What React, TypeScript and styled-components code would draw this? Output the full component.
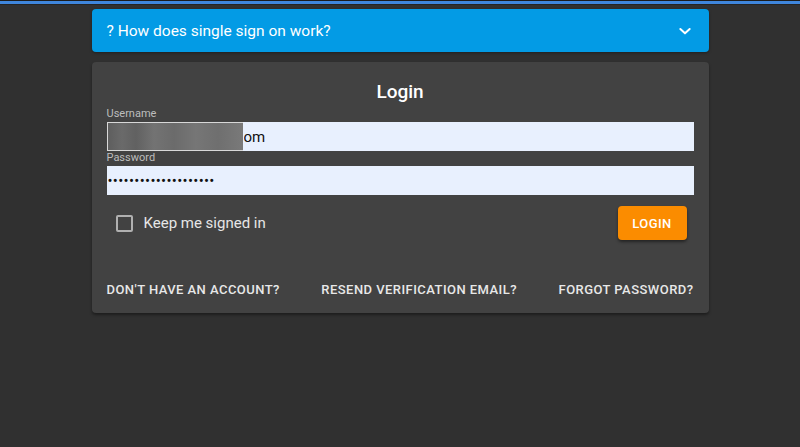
import React, { useState } from "react";
import styled, { createGlobalStyle } from "styled-components";

const GlobalStyle = createGlobalStyle`
  html, body {
    margin: 0;
    padding: 0;
    background-color: #303030;
    font-family: Roboto, "Liberation Sans", Arial, sans-serif;
  }
  * {
    box-sizing: border-box;
  }
`;

const Page = styled.div`
  min-height: 447px;
  background-color: #303030;
`;

const TopBar = styled.div`
  height: 5px;
  border-top: 1px solid #1c1c1c;
  border-bottom: 1px solid #242424;
  background-color: #3f86dc;
`;

const Main = styled.div`
  width: 617px;
  margin: 4px auto 0;
`;

const Accordion = styled.div`
  height: 43px;
  background-color: #039be5;
  border-radius: 4px;
  display: flex;
  align-items: center;
  justify-content: space-between;
  padding: 0 15px;
  color: #fff;
  font-size: 15.5px;
  box-shadow: 0 1px 3px rgba(0, 0, 0, 0.35);
`;

const Chevron = styled.svg`
  width: 16px;
  height: 16px;
  margin-right: 1px;
`;

const Card = styled.div`
  margin-top: 10px;
  background-color: #424242;
  border-radius: 4px;
  padding: 19px 15px 15px;
  box-shadow: 0 2px 3px rgba(0, 0, 0, 0.4);
`;

const Title = styled.div`
  text-align: center;
  color: #fff;
  font-size: 19px;
  font-weight: 500;
  line-height: 22px;
  margin-bottom: 4px;
`;

const Label = styled.div`
  color: #bdbdbd;
  font-size: 11px;
  line-height: 13px;
  margin-bottom: 2px;
`;

const Field = styled.div`
  position: relative;
  height: 29px;
`;

const Input = styled.input<{ $indent?: number; $spacing?: number }>`
  width: 100%;
  height: 29px;
  border: none;
  outline: none;
  background-color: #e8f0fe;
  color: #111;
  font-family: Roboto, "Liberation Sans", Arial, sans-serif;
  font-size: 15px;
  letter-spacing: ${(p) => p.$spacing ?? 0}px;
  padding: 0 0 0 ${(p) => p.$indent ?? 1}px;
`;

const Redacted = styled.span`
  position: absolute;
  left: 0;
  top: 0;
  width: 136px;
  height: 29px;
  border: 1px solid #d8d8d8;
  border-right: none;
  background: linear-gradient(
    90deg,
    #5e5e5e 0px,
    #6a6a6a 14px,
    #616161 28px,
    #737373 46px,
    #6b6b6b 66px,
    #767676 88px,
    #6f6f6f 110px,
    #7a7a7a 136px
  );
`;

const ActionRow = styled.div`
  display: flex;
  align-items: center;
  justify-content: space-between;
  margin-top: 11px;
  padding: 0 7px 0 9px;
`;

const CheckLabel = styled.label`
  display: flex;
  align-items: center;
  gap: 11px;
  color: #e6e6e6;
  font-size: 15px;
  cursor: pointer;
`;

const Box = styled.span<{ $checked: boolean }>`
  width: 17px;
  height: 17px;
  border: 2px solid #b0b0b0;
  border-radius: 2px;
  background-color: ${(p) => (p.$checked ? "#b0b0b0" : "transparent")};
`;

const LoginButton = styled.button`
  width: 69px;
  height: 34px;
  border: none;
  border-radius: 4px;
  background-color: #fb8c00;
  color: #fff;
  font-family: Roboto, "Liberation Sans", Arial, sans-serif;
  font-size: 13px;
  font-weight: 500;
  letter-spacing: 0.4px;
  box-shadow: 0 2px 3px rgba(0, 0, 0, 0.45);
  cursor: pointer;
`;

const Links = styled.div`
  display: flex;
  justify-content: space-between;
  margin-top: 42px;
  line-height: 16px;
`;

const LinkButton = styled.a`
  color: #e8e8e8;
  font-size: 13px;
  font-weight: 500;
  letter-spacing: 0.45px;
  text-transform: uppercase;
  text-decoration: none;
  cursor: pointer;
`;

export default function App() {
  const [keep, setKeep] = useState(false);

  return (
    <Page>
      <GlobalStyle />
      <TopBar />
      <Main>
        <Accordion>
          <span>? How does single sign on work?</span>
          <Chevron viewBox="0 0 24 24" fill="none" stroke="#fff" strokeWidth="3" strokeLinecap="round" strokeLinejoin="round">
            <polyline points="5 9 12 15.5 19 9" />
          </Chevron>
        </Accordion>

        <Card>
          <Title>Login</Title>

          <Label>Username</Label>
          <Field>
            <Input $indent={137} defaultValue="om" readOnly />
            <Redacted />
          </Field>

          <Label>Password</Label>
          <Field>
            <Input type="password" $spacing={0.3} defaultValue="passwordpassword1234" readOnly />
          </Field>

          <ActionRow>
            <CheckLabel onClick={() => setKeep(!keep)}>
              <Box $checked={keep} />
              Keep me signed in
            </CheckLabel>
            <LoginButton>LOGIN</LoginButton>
          </ActionRow>

          <Links>
            <LinkButton>Don't have an account?</LinkButton>
            <LinkButton>Resend verification email?</LinkButton>
            <LinkButton>Forgot password?</LinkButton>
          </Links>
        </Card>
      </Main>
    </Page>
  );
}
